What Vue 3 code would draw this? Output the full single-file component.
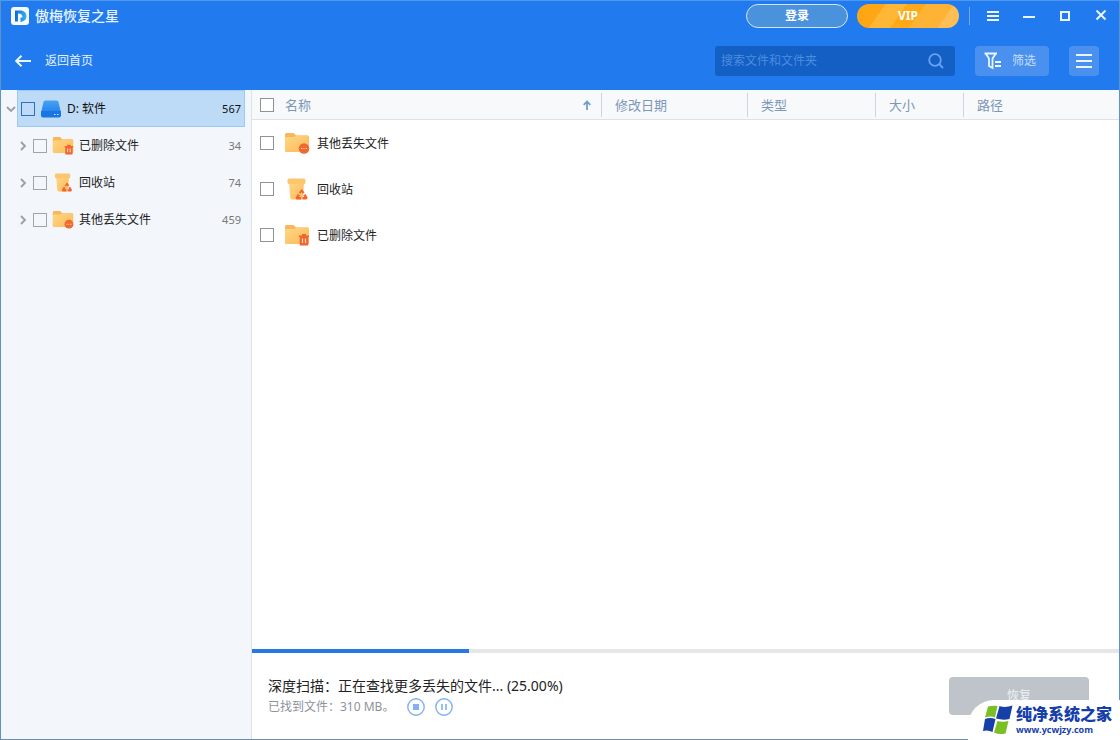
<script setup>
import { ref } from 'vue'

const query = ref('')
const columns = [
  { key: 'date', label: '修改日期' },
  { key: 'type', label: '类型' },
  { key: 'size', label: '大小' },
  { key: 'path', label: '路径' },
]
const folders = ref([
  { id: 'deleted', name: '已删除文件', count: 34, checked: false },
  { id: 'recycle', name: '回收站', count: 74, checked: false },
  { id: 'lost', name: '其他丢失文件', count: 459, checked: false },
])
const files = ref([
  { id: 'lost', name: '其他丢失文件', checked: false },
  { id: 'recycle', name: '回收站', checked: false },
  { id: 'deleted', name: '已删除文件', checked: false },
])
const progress = 25
</script>

<template>
  <div class="window">
    <svg class="sprite" aria-hidden="true">
      <defs>
        <linearGradient id="gold" x1="0" y1="0" x2="1" y2="1">
          <stop offset="0" stop-color="#ffd783" />
          <stop offset="1" stop-color="#fbb95a" />
        </linearGradient>
        <linearGradient id="azure" x1="0" y1="0" x2="0" y2="1">
          <stop offset="0" stop-color="#48a2f2" />
          <stop offset="1" stop-color="#2381ee" />
        </linearGradient>
        <linearGradient id="brand" x1="0" y1="0" x2="1" y2="0">
          <stop offset="0" stop-color="#1268dc" />
          <stop offset="1" stop-color="#35b5ee" />
        </linearGradient>
        <symbol id="folder" viewBox="0 0 26 22">
          <path d="M1 2.500Q1 1 2.500 1H9Q10 1 10.500 1.800L12 3.500H23.500Q25 3.500 25 5V18Q25 20 23.500 20H2.500Q1 20 1 18Z" fill="#f7b85b" />
          <path d="M1 6Q1 5 3 5H10L12.500 3.500H23.500Q25 3.500 25 5V18Q25 20 23.500 20H2.500Q1 20 1 18Z" fill="url(#gold)" />
        </symbol>
        <symbol id="deleted" viewBox="0 0 26 22">
          <use href="#folder" width="26" height="22" />
          <path d="M15 11.500H18V10H22V11.500H25V13H24.300V21.500H15.700V13H15Z" fill="#f1652f" />
          <path d="M18.500 14.500V19M21.500 14.500V19" stroke="#ffe2c2" stroke-width="1.200" />
        </symbol>
        <symbol id="lost" viewBox="0 0 26 22">
          <use href="#folder" width="26" height="22" />
          <circle cx="20" cy="16.500" r="5.200" fill="#f0682f" />
          <path d="M17 16.500H18.200M19.400 16.500H20.600M21.800 16.500H23" stroke="#ffe4c9" stroke-width="1.200" />
        </symbol>
        <symbol id="recycle" viewBox="0 0 26 22">
          <path d="M5 5H20L18.700 20Q18.500 21.500 17 21.500H8Q6.500 21.500 6.300 20Z" fill="url(#gold)" />
          <path d="M5 .500H20Q21.500 .500 21.500 2V4.500Q21.500 6 20 6H5Q3.500 6 3.500 4.500V2Q3.500 .500 5 .500Z" fill="#fdc66e" />
          <path d="M15 14.800L17 11.500H18.500L20.500 14.800L18.800 15.800L17.700 14L16.600 15.800Z" fill="#f1652f" />
          <path d="M13.800 16L16 17.200L15 19H17V21.500H12.500L11.500 19.800Z" fill="#f1652f" />
          <path d="M21.500 16L19.300 17.200L20.300 19H18.500V21.500H22.500L23.700 19.800Z" fill="#f1652f" />
        </symbol>
        <symbol id="right" viewBox="0 0 8 10">
          <path d="M2 1L6 5L2 9" fill="none" stroke="#9a9fa5" stroke-width="1.800" />
        </symbol>
      </defs>
    </svg>

    <header class="top">
      <div class="titlebar">
        <svg class="logo" viewBox="0 0 18 18" aria-hidden="true">
          <rect width="18" height="18" rx="3" fill="#f4faff" />
          <path d="M4 3.500H10.500Q15.500 4.500 15.500 9.500Q15 14 9.500 15V10.500H11.500Q11.500 7 8.500 6.500H7V14.500H4Z" fill="url(#brand)" />
        </svg>
        <h1>傲梅恢复之星</h1>
        <button class="pill login" type="button">登录</button>
        <button class="pill vip" type="button">VIP</button>
        <span class="split"></span>
        <div class="controls">
          <button type="button" aria-label="菜单"><svg viewBox="0 0 12 12"><path d="M0 2H12M0 6H12M0 10H12" stroke="#eaf6ff" stroke-width="2" /></svg></button>
          <button type="button" aria-label="最小化"><svg viewBox="0 0 12 12"><path d="M0 7H12" stroke="#eaf6ff" stroke-width="2" /></svg></button>
          <button type="button" aria-label="最大化"><svg viewBox="0 0 12 12"><rect x="2" y="2" width="8" height="8" fill="none" stroke="#eaf6ff" stroke-width="2" /></svg></button>
          <button type="button" aria-label="关闭"><svg viewBox="0 0 12 12"><path d="M1.500 .500L10.500 9.500M10.500 .500L1.500 9.500" stroke="#eaf6ff" stroke-width="2" /></svg></button>
        </div>
      </div>
      <div class="toolbar">
        <a class="back" href="#">
          <svg viewBox="0 0 16 12" aria-hidden="true"><path d="M16 6H1.500M6.500 .700L1.200 6L6.500 11.300" fill="none" stroke="#eaf6ff" stroke-width="2" /></svg>
          <span>返回首页</span>
        </a>
        <form class="search" role="search" @submit.prevent>
          <input v-model="query" type="text" aria-label="搜索文件和文件夹" placeholder="搜索文件和文件夹" />
          <button type="submit" aria-label="搜索"><svg viewBox="0 0 16 16"><circle cx="7" cy="7" r="5.800" fill="none" stroke="#66a3f5" stroke-width="1.800" /><path d="M11.200 11.200L15 15" stroke="#66a3f5" stroke-width="1.800" /></svg></button>
        </form>
        <button class="tool filter" type="button">
          <svg viewBox="0 0 18 18" aria-hidden="true"><path d="M.500 1.500H13M2 2L5 6.500V14L8.500 16V6.500L11.500 2M11 10H17M11 14H17" fill="none" stroke="#eaf6ff" stroke-width="1.800" /></svg>
          <span>筛选</span>
        </button>
        <button class="tool view" type="button" aria-label="列表视图"><svg viewBox="0 0 16 16"><path d="M0 2H16M0 8H16M0 14H16" stroke="#eaf6ff" stroke-width="2" /></svg></button>
      </div>
    </header>

    <div class="body">
      <nav class="side" aria-label="文件夹">
        <div class="drive">
          <button class="twist" type="button" aria-label="折叠"><svg viewBox="0 0 10 8"><path d="M1 2L5 6L9 2" fill="none" stroke="#9a9fa5" stroke-width="1.800" /></svg></button>
          <label class="driverow">
            <input type="checkbox" />
            <svg class="disk" viewBox="0 0 20 18" aria-hidden="true">
              <path d="M2.500 2Q3 .500 4.500 .500H15.500Q17 .500 17.500 2L20 13H0Z" fill="url(#azure)" />
              <path d="M0 11H20V15.500Q20 17.500 18 17.500H2Q0 17.500 0 15.500Z" fill="#1a74e2" />
              <path d="M13 14.500H14.500M16 14.500H17.500" stroke="#c8e5ff" stroke-width="1.200" />
            </svg>
            <span class="name">D: 软件</span>
            <span class="count">567</span>
          </label>
        </div>
        <div v-for="f in folders" :key="f.id" class="node">
          <button class="twist" type="button" aria-label="展开"><svg viewBox="0 0 8 10"><use href="#right" width="8" height="10" /></svg></button>
          <label>
            <input v-model="f.checked" type="checkbox" />
            <svg class="icon" aria-hidden="true"><use :href="'#' + f.id" /></svg>
            <span class="name">{{ f.name }}</span>
            <span class="count">{{ f.count }}</span>
          </label>
        </div>
      </nav>

      <main class="main">
        <div class="list">
          <table>
            <colgroup><col class="c-name" /><col class="c-date" /><col class="c-type" /><col class="c-size" /><col /></colgroup>
            <thead>
              <tr>
                <th scope="col">
                  <div class="namehead">
                    <input type="checkbox" aria-label="全选" />
                    <span>名称</span>
                    <svg viewBox="0 0 8 10" aria-label="升序"><path d="M4 10V1.500M.700 4.800L4 1.500L7.300 4.800" fill="none" stroke="#6f9fca" stroke-width="1.800" /></svg>
                  </div>
                </th>
                <th v-for="c in columns" :key="c.key" scope="col"><div class="head">{{ c.label }}</div></th>
              </tr>
            </thead>
            <tbody>
              <tr v-for="f in files" :key="f.id">
                <td>
                  <label class="file">
                    <input v-model="f.checked" type="checkbox" />
                    <svg class="icon" aria-hidden="true"><use :href="'#' + f.id" /></svg>
                    <span>{{ f.name }}</span>
                  </label>
                </td>
                <td></td><td></td><td></td><td></td>
              </tr>
            </tbody>
          </table>
        </div>

        <div class="track" role="progressbar" aria-label="深度扫描" :aria-valuenow="progress"><div class="bar" :style="{ width: progress + '%' }"></div></div>
        <footer class="foot">
          <div class="status">
            <p class="scan">深度扫描：正在查找更多丢失的文件... (25.00%)</p>
            <div class="found">
              <span>已找到文件：310 MB。</span>
              <button type="button" aria-label="停止"><svg viewBox="0 0 18 18"><circle cx="9" cy="9" r="8.200" fill="none" stroke="#7fb1f3" stroke-width="1.400" /><rect x="6" y="6" width="6" height="6" fill="#7fb1f3" /></svg></button>
              <button type="button" aria-label="暂停"><svg viewBox="0 0 18 18"><circle cx="9" cy="9" r="8.200" fill="none" stroke="#7fb1f3" stroke-width="1.400" /><path d="M7 6V12M11 6V12" stroke="#7fb1f3" stroke-width="1.600" /></svg></button>
            </div>
          </div>
          <button class="recover" type="button" disabled>恢复</button>
        </footer>
      </main>
    </div>

    <aside class="site">
      <svg viewBox="0 0 30 30" aria-hidden="true">
        <path d="M5 1.500Q9 .500 14.500 1L12 12.500Q8 10.500 2 12.500Z" fill="#7cbf24" />
        <path d="M16.500 1Q22 3 29.500 .500L26.500 14Q20 15.500 13 13.500Z" fill="#1640a8" />
        <path d="M2 14Q7 12 12.500 14L9.500 27Q5 24.500 0 26Z" fill="#1640a8" />
        <path d="M14.500 16Q20 17.500 25.500 16L22.500 28.500Q16 30 11 27.500Z" fill="#7cbf24" />
      </svg>
      <div class="sitename"><strong>纯净系统之家</strong><span>www.ycwjzy.com</span></div>
    </aside>
  </div>
</template>

<style>
body { margin: 0; background: #fff; }
</style>

<style scoped>
* { box-sizing: border-box; }
.window {
  position: relative;
  display: flex;
  flex-direction: column;
  min-height: 100vh;
  border: 1px solid #5c93c8;
  border-top-color: #4f98f2;
  border-bottom-color: #6a8fae;
  background: #fff;
  color: #222;
  font: 12px/18px "Noto Sans", "Noto Sans CJK SC", sans-serif;
}
.sprite { position: absolute; width: 0; height: 0; }
button { display: flex; align-items: center; justify-content: center; padding: 0; border: 0; background: none; font: inherit; color: inherit; }
svg { display: block; flex: none; }
input[type="checkbox"] { flex: none; appearance: none; width: 14px; height: 14px; margin: 0; border: 1px solid #8f9499; background: #fff; }
input[type="checkbox"]:checked { background: #237bed; }

.top { background: #227bee; color: #e6f3ff; }
.titlebar { display: flex; align-items: center; height: 30px; padding: 0 12px 0 10px; }
.logo { width: 18px; height: 18px; }
h1 { flex: 1; margin: 0 0 0 6px; font-size: 14px; line-height: 20px; font-weight: 500; }
.pill { width: 102px; height: 24px; border-radius: 12px; color: #fff; font-weight: 700; }
.login { border: 1px solid #cfe6fb; background: #4a92dc; }
.vip { margin-left: 9px; background: linear-gradient(125deg, #ffa615 0 24%, #ffb735 24% 42%, #ffa916 42% 58%, #ffb336 58% 82%, #ffbf55 82%); }
.split { width: 1px; height: 18px; margin-left: 10px; background: #6faaf4; }
.controls { display: flex; gap: 24px; margin-left: 17px; }
.controls button, .controls svg { width: 12px; height: 12px; }
.toolbar { display: flex; align-items: center; height: 59px; padding: 0 20px 0 14px; }
.back { display: flex; align-items: center; gap: 14px; margin-right: auto; color: inherit; text-decoration: none; }
.back svg { width: 16px; height: 12px; }
.search { display: flex; align-items: center; width: 240px; height: 30px; padding: 0 11px 0 6px; border-radius: 3px; background: #135fc3; }
.search input { flex: 1; min-width: 0; padding: 0; border: 0; outline: 0; background: none; color: #fff; font: inherit; }
.search input::placeholder { color: #4d8de0; opacity: 1; }
.search svg { width: 16px; height: 16px; }
.tool { height: 30px; border-radius: 4px; background: #4a91ef; color: #c5dffc; }
.filter { justify-content: flex-start; width: 74px; margin-left: 20px; padding-left: 9px; gap: 10px; }
.filter svg { width: 18px; height: 18px; }
.view { width: 30px; margin-left: 20px; }
.view svg { width: 16px; height: 16px; }

.body { display: flex; flex: 1; }
.side { flex: none; width: 251px; padding-right: 6px; border-right: 1px solid #dbe3ee; background: #f3f7fc; }
.drive, .node { display: flex; align-items: center; height: 37px; }
.drive .twist { width: 16px; padding-left: 4px; }
.drive .twist svg { width: 10px; height: 8px; }
.driverow { display: flex; flex: 1; align-items: center; height: 37px; padding: 0 3px; border: 1px solid #9dc9f2; background: #bddaf7; color: #111; }
.driverow input[type="checkbox"] { border-color: #2f70bd; background: none; }
.disk { width: 20px; height: 18px; margin-left: 6px; }
.driverow .name { margin-left: 6px; }
.count { margin-left: auto; font-size: 11px; color: #777; }
.driverow .count { color: #111; }
.node .twist { width: 8px; margin-left: 18px; }
.node .twist svg { width: 8px; height: 10px; }
.node label { display: flex; flex: 1; align-items: center; padding: 0 4px 0 6px; }
.node input[type="checkbox"] { background: none; border-color: #a0a5aa; }
.node .icon { width: 22px; height: 19px; margin: 0 5px; }

.main { display: flex; flex: 1; flex-direction: column; min-width: 0; }
.list { flex: 1; }
table { width: 100%; table-layout: fixed; border-collapse: separate; border-spacing: 0; }
.c-name { width: 350px; }
.c-date { width: 146px; }
.c-type { width: 128px; }
.c-size { width: 88px; }
th { height: 30px; padding: 0; border-bottom: 1px solid #dde2e8; background: #f7f9fb; color: #7c97b8; font-size: 13px; font-weight: 400; text-align: left; }
.namehead { display: flex; align-items: center; height: 24px; padding: 0 10px 0 8px; border-right: 1px solid #ccd5e0; }
.namehead span { margin-left: 11px; }
.namehead svg { width: 8px; height: 10px; margin-left: auto; }
.head { height: 24px; padding-left: 13px; line-height: 24px; border-right: 1px solid #ccd5e0; }
th:last-child .head { border-right: 0; }
td { height: 46px; padding: 0; }
.file { display: flex; align-items: center; padding-left: 8px; }
.file span { padding-top: 2px; }
.file .icon { width: 26px; height: 22px; margin: 0 7px 0 10px; }
.track { height: 4px; background: #e5e6e8; }
.bar { height: 4px; background: #2779e2; }
.foot { display: flex; align-items: flex-start; justify-content: space-between; height: 86px; padding: 24px 30px 0 16px; }
.status { margin-top: -1px; }
.scan { margin: 0; font-size: 14px; line-height: 20px; }
.found { display: flex; align-items: center; height: 22px; color: #8d929b; }
.found button { margin-left: 10px; }
.found span { margin-right: 3px; }
.found svg { width: 18px; height: 18px; }
.recover { width: 140px; height: 38px; border-radius: 4px; background: #bec4ca; color: #eef1f4; }
.site { position: absolute; right: -1px; bottom: -1px; display: flex; align-items: center; gap: 3px; width: 152px; height: 40px; padding-left: 15px; border-radius: 26px 0 0 0; background: #fff; color: #1640a8; }
.site svg { width: 30px; height: 30px; }
.sitename { display: flex; flex-direction: column; }
.site strong { font-size: 16px; line-height: 20px; font-weight: 900; white-space: nowrap; }
.site span { font: 700 9px/12px "Open Sans", sans-serif; }
</style>
